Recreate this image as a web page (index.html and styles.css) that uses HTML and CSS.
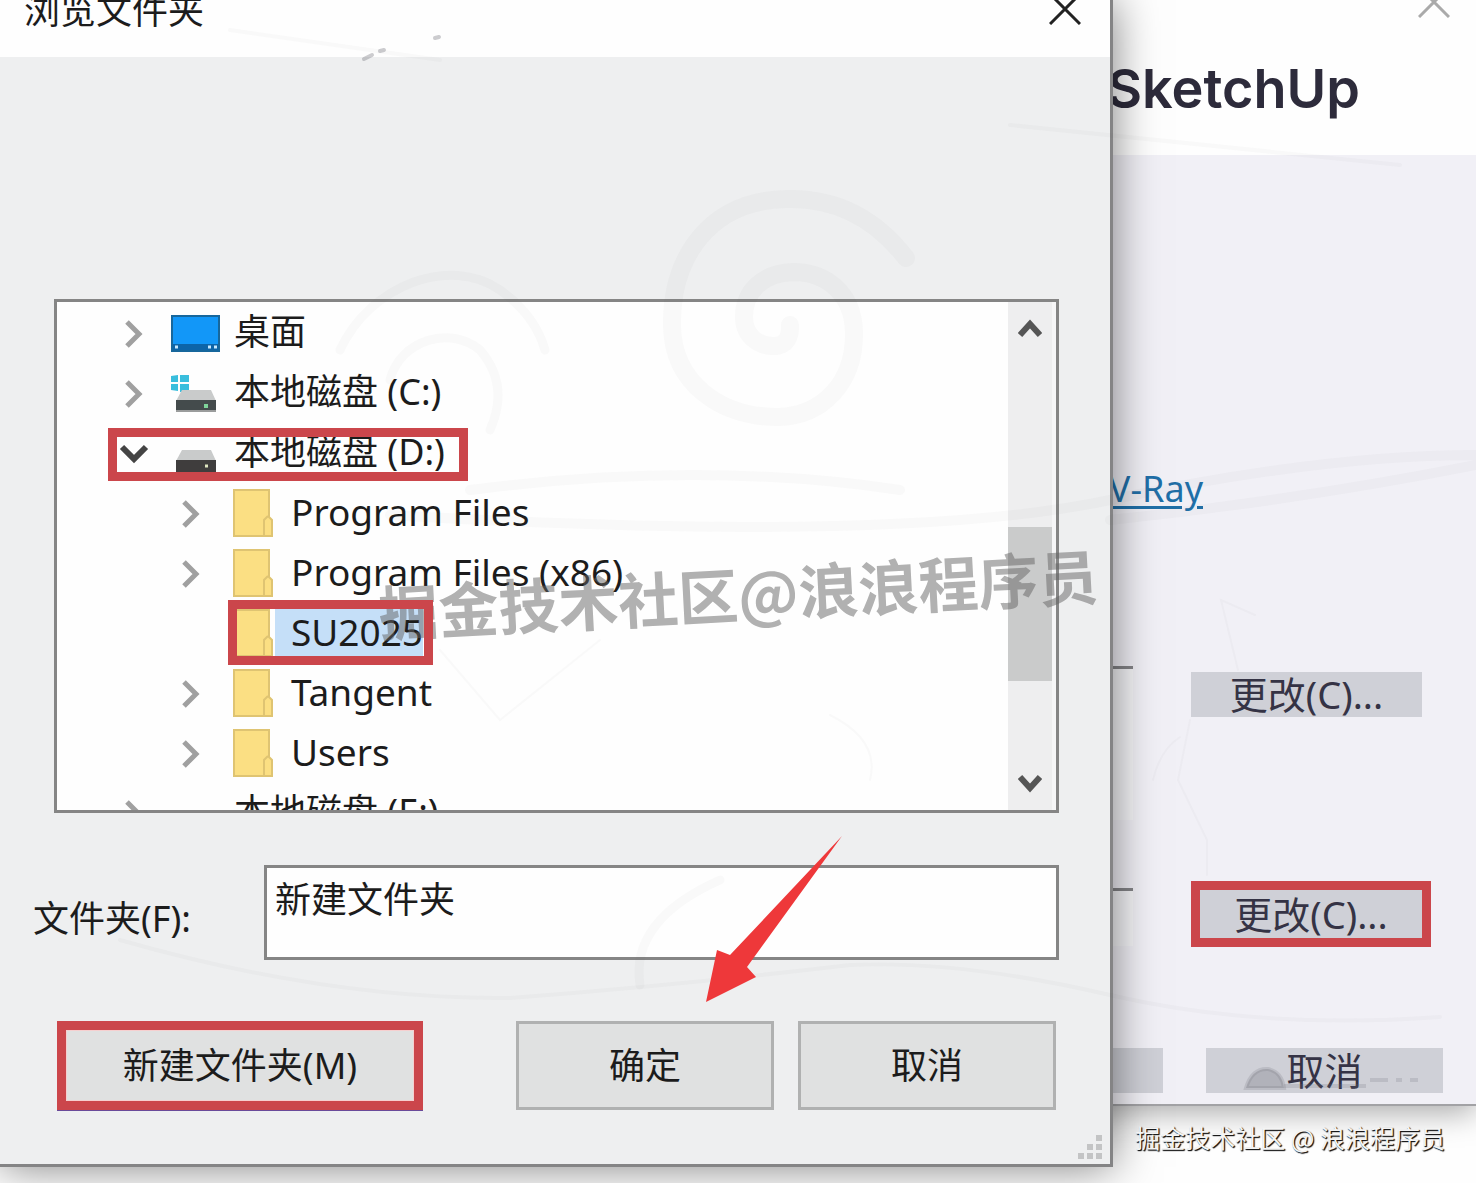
FILE: index.html
```
<!DOCTYPE html>
<html lang="zh-CN">
<head>
    <meta charset="utf-8">
    <title>浏览文件夹</title>
    <link rel="stylesheet" href="styles.css">
</head>
<body>
    <!-- Installer window -->
    <section class="installer">
        <header class="installer-header">
            <button class="close close-inactive" type="button" aria-label="关闭">
                <svg width="32" height="32" viewBox="0 0 32 32"><path d="M1 1L31 31M31 1L1 31"/></svg>
            </button>
            <h1>SketchUp</h1>
        </header>
        <div class="installer-main">
            <p class="link-line"><a href="#">V-Ray</a></p>
            <div class="path-row">
                <input class="path path-tall" type="text" aria-label="SketchUp">
                <button class="flat-btn" type="button">更改(C)...</button>
            </div>
            <div class="path-row">
                <input class="path" type="text" aria-label="V-Ray">
                <button class="flat-btn marked-change" type="button">更改(C)...</button>
            </div>
            <div class="installer-footer">
                <button class="flat-btn" type="button" aria-label="安装"></button>
                <button class="flat-btn" type="button">取消</button>
            </div>
        </div>
    </section>

    <!-- Browse for folder dialog -->
    <section class="dialog">
        <header class="title-bar">
            <h2>浏览文件夹</h2>
            <button class="close" type="button" aria-label="关闭">
                <svg width="32" height="32" viewBox="0 0 32 32"><path d="M1 1L31 31M31 1L1 31"/></svg>
            </button>
        </header>

        <form class="pane">
            <div class="tree">
                <ul>
                    <li>
                        <button class="toggle" type="button" aria-label="展开"><svg width="20" height="30" viewBox="0 0 20 30"><path d="M3 3L15 15L3 27"/></svg></button>
                        <svg class="icon" width="50" height="38" viewBox="0 0 50 38">
                            <rect x="1" y="1" width="47" height="35" fill="#1297f8" stroke="#17679c" stroke-width="2"/>
                            <path d="M2 32H47" stroke="#0c64a8" stroke-width="6"/>
                            <path d="M4 32H7M37 32H40M43 32H46" stroke="#c4e8ff" stroke-width="3"/>
                        </svg>
                        <span>桌面</span>
                    </li>
                    <li>
                        <button class="toggle" type="button" aria-label="展开"><svg width="20" height="30" viewBox="0 0 20 30"><path d="M3 3L15 15L3 27"/></svg></button>
                        <svg class="icon" width="50" height="38" viewBox="0 0 50 38">
                            <path d="M0 1L7 0V7H0ZM9 0L18 -1V7H9ZM0 9H7V16L0 15ZM9 9H18V19L9 17Z" fill="#39bedd"/>
                            <path d="M11 15H40L45 26H5Z" fill="#c9cbcb"/>
                            <rect x="5" y="25" width="40" height="12" fill="#444b4c"/>
                            <path d="M5 36H45" stroke="#9a9c9c" stroke-width="2"/>
                            <path d="M33 31H37" stroke="#7fd49a" stroke-width="4"/>
                        </svg>
                        <span>本地磁盘 (C:)</span>
                    </li>
                    <li class="marked-drive">
                        <button class="toggle open" type="button" aria-label="折叠"><svg width="30" height="20" viewBox="0 0 30 20"><path d="M3 3L15 15L27 3"/></svg></button>
                        <svg class="icon" width="50" height="38" viewBox="0 0 50 38">
                            <path d="M11 15H40L45 26H5Z" fill="#c9cbcb"/>
                            <rect x="5" y="25" width="40" height="12" fill="#3f3d3d"/>
                            <path d="M34 31H37" stroke="#dfe6c0" stroke-width="3"/>
                        </svg>
                        <span>本地磁盘 (D:)</span>
                    </li>
                    <li class="child">
                        <button class="toggle" type="button" aria-label="展开"><svg width="20" height="30" viewBox="0 0 20 30"><path d="M3 3L15 15L3 27"/></svg></button>
                        <svg class="folder" width="40" height="48" viewBox="0 0 40 48"><path d="M1 1H36V28L39 31V47H1Z"/><path d="M31 47V31L35 27"/></svg>
                        <span>Program Files</span>
                    </li>
                    <li class="child">
                        <button class="toggle" type="button" aria-label="展开"><svg width="20" height="30" viewBox="0 0 20 30"><path d="M3 3L15 15L3 27"/></svg></button>
                        <svg class="folder" width="40" height="48" viewBox="0 0 40 48"><path d="M1 1H36V28L39 31V47H1Z"/><path d="M31 47V31L35 27"/></svg>
                        <span>Program Files (x86)</span>
                    </li>
                    <li class="child marked-folder">
                        <i class="toggle"></i>
                        <svg class="folder" width="40" height="48" viewBox="0 0 40 48"><path d="M1 1H36V28L39 31V47H1Z"/><path d="M31 47V31L35 27"/></svg>
                        <span class="selected">SU2025</span>
                    </li>
                    <li class="child">
                        <button class="toggle" type="button" aria-label="展开"><svg width="20" height="30" viewBox="0 0 20 30"><path d="M3 3L15 15L3 27"/></svg></button>
                        <svg class="folder" width="40" height="48" viewBox="0 0 40 48"><path d="M1 1H36V28L39 31V47H1Z"/><path d="M31 47V31L35 27"/></svg>
                        <span>Tangent</span>
                    </li>
                    <li class="child">
                        <button class="toggle" type="button" aria-label="展开"><svg width="20" height="30" viewBox="0 0 20 30"><path d="M3 3L15 15L3 27"/></svg></button>
                        <svg class="folder" width="40" height="48" viewBox="0 0 40 48"><path d="M1 1H36V28L39 31V47H1Z"/><path d="M31 47V31L35 27"/></svg>
                        <span>Users</span>
                    </li>
                    <li>
                        <button class="toggle" type="button" aria-label="展开"><svg width="20" height="30" viewBox="0 0 20 30"><path d="M3 3L15 15L3 27"/></svg></button>
                        <i class="icon"></i>
                        <span>本地磁盘 (E:)</span>
                    </li>
                </ul>
                <div class="scrollbar">
                    <button type="button" aria-label="向上"><svg width="24" height="20" viewBox="0 0 24 20"><path d="M2 17L12 6L22 17"/></svg></button>
                    <div class="track"><div class="thumb"></div></div>
                    <button type="button" aria-label="向下"><svg width="24" height="20" viewBox="0 0 24 20"><path d="M2 3L12 14L22 3"/></svg></button>
                </div>
            </div>

            <div class="field">
                <label for="folder">文件夹(F):</label>
                <input type="text" id="folder" name="folder" value="新建文件夹">
            </div>

            <div class="actions">
                <button class="new-folder" type="button">新建文件夹(M)</button>
                <button type="button">确定</button>
                <button type="button">取消</button>
            </div>
        </form>

        <svg class="grip" width="24" height="24" viewBox="0 0 24 24"><path d="M18 0h6v6h-6zM9 9h6v6H9zM18 9h6v6h-6zM0 18h6v6H0zM9 18h6v6H9zM18 18h6v6h-6z"/></svg>
    </section>

    <!-- Pale line drawing and the red arrow -->
    <svg class="overlay" width="1476" height="1183" viewBox="0 0 1476 1183">
        <g class="sketch">
            <path stroke-width="18" d="M906 258C872 214 830 198 787 199C710 200 671 257 672 326C673 383 720 417 778 417C823 416 855 382 854 332C853 292 825 272 793 272C763 273 744 291 744 317C744 337 760 347 776 346Q791 344 790 325"/>
            <path stroke-width="9" d="M340 350C370 285 450 255 500 290Q535 315 545 350M390 380C400 340 450 325 480 350Q510 385 490 430"/>
            <path stroke-width="10" d="M390 515Q900 545 1110 500T1476 455M1110 520Q1300 500 1476 465M470 490Q700 460 900 490"/>
            <path stroke-width="4" d="M120 940Q330 1000 510 998Q680 985 850 965Q960 960 1110 995T1440 1017M230 30L440 60M1010 125L1400 165"/>
            <path stroke-width="2" d="M1255 615L1221 600L1238 670M1190 720L1178 780L1207 840V875M1180 737Q1160 750 1153 780M440 650L500 720L600 640M830 715Q880 740 870 780"/>
            <path stroke-width="9" d="M640 985Q630 920 720 880"/>
        </g>
        <path class="specks" d="M364 59L372 55M380 51L384 50M435 38L439 37"/>
        <g class="smudge">
            <path d="M1246 1088Q1252 1068 1268 1069Q1282 1072 1284 1088Z"/>
            <path d="M1284 1086H1366M1370 1080H1388M1396 1080H1402M1410 1080H1418"/>
        </g>
        <path class="arrow" d="M842 836L730 955L717 950L706 1002L756 977L747 967Z"/>
    </svg>
    <p class="watermark">掘金技术社区@浪浪程序员</p>
    <p class="credit">掘金技术社区 @ 浪浪程序员</p>
</body>
</html>
```
FILE: styles.css
```
body {
    position: relative;
    min-height: 100vh;
    margin: 0;
    overflow: hidden;
    background: #fefefe;
    color: #1c1c1c;
    font: 36px/48px "Noto Sans", "Noto Sans CJK SC", sans-serif;
}

* {
    box-sizing: border-box;
}

h1, h2, p, ul {
    margin: 0;
    padding: 0;
}

button, input {
    margin: 0;
    padding: 0;
    border: 0;
    border-radius: 0;
    background: none;
    color: inherit;
    font: inherit;
}

svg {
    display: block;
    fill: none;
}

.close svg {
    stroke: #222;
    stroke-width: 3;
}

.close-inactive svg {
    stroke: #aaa;
}

/* Installer window */
.installer {
    position: absolute;
    top: 0;
    left: 800px;
    right: 0;
    border-bottom: 2px solid #a2a2a5;
    background: #f1f0f6;
    box-shadow: 0 6px 30px rgba(0, 0, 0, 0.35);
}

.installer-header {
    height: 155px;
    padding: 0 26px;
    background: #fefefe;
    text-align: right;
}

.installer-header .close {
    display: flex;
    align-items: flex-start;
    height: 57px;
    margin-left: auto;
}

.installer-header .close svg {
    margin-top: -14px;
}

.installer-header h1 {
    padding-right: 90px;
    color: #2d2b3b;
    font: 600 54px/64px Inter, sans-serif;
}

.installer-main {
    display: flex;
    flex-direction: column;
    padding: 310px 33px 11px;
}

.link-line {
    padding-right: 240px;
    text-align: right;
}

.link-line a {
    color: #1f6fa8;
    text-decoration-thickness: 3px;
    text-underline-offset: 4px;
}

.path-row {
    display: flex;
    align-items: flex-start;
    gap: 58px;
    height: 222px;
}

.link-line + .path-row {
    margin-top: 153px;
}

.path-row:nth-of-type(2) {
    height: 160px;
}

.path {
    flex: 1;
    min-width: 0;
    height: 58px;
    border-top: 3px solid #858588;
    background: #f5f5f8;
}

.path-tall {
    height: 154px;
}

.flat-btn {
    flex-shrink: 0;
    width: 237px;
    height: 45px;
    background: #cfd0d7;
    color: #353345;
    font-size: 38px;
    line-height: 45px;
    white-space: nowrap;
}

.path-row .flat-btn {
    width: 231px;
    margin: 6px 21px 0 0;
}

.path-row .marked-change {
    width: 240px;
    height: 66px;
    margin: -7px 12px 0 0;
    border: 9px solid #cb464b;
}

.installer-footer {
    display: flex;
    justify-content: flex-end;
    gap: 43px;
}

/* Folder dialog */
.dialog {
    position: absolute;
    top: 0;
    left: 0;
    right: 363px;
    border: solid #848485;
    border-width: 0 3px 3px 0;
    background: #eeeff0;
    box-shadow: 0 0 42px rgba(0, 0, 0, 0.5);
}

.title-bar {
    display: flex;
    justify-content: space-between;
    height: 57px;
    padding: 0 29px 0 24px;
    background: #fefefe;
}

.title-bar h2 {
    font-size: 36px;
    font-weight: 400;
    line-height: 22px;
}

.title-bar .close {
    height: 18px;
}

.title-bar .close svg {
    margin-top: -7px;
}

.pane {
    padding: 242px 51px 54px 54px;
}

.tree {
    display: flex;
    height: 514px;
    border: 3px solid #858585;
    background: #fefefe;
    overflow: hidden;
}

.tree ul {
    flex: 1;
    list-style: none;
}

.tree li {
    position: relative;
    display: flex;
    align-items: center;
    height: 60px;
    padding-left: 62px;
    white-space: nowrap;
}

.tree li.child {
    padding-left: 119px;
    font-size: 37px;
}

.toggle {
    display: flex;
    justify-content: center;
    width: 30px;
    margin: 4px 22px 0 0;
}

.toggle svg {
    stroke: #a0a0a0;
    stroke-width: 5;
}

.toggle.open svg {
    stroke: #444;
    stroke-width: 6;
}

.icon {
    width: 50px;
    margin: 3px 13px 0 0;
}

.child .toggle {
    margin-right: 27px;
}

.folder {
    margin: 2px 18px 0 0;
    fill: #fbdf83;
    stroke: #dfc472;
    stroke-width: 2;
}

.selected {
    background: #c5dff8;
    box-shadow: -16px 0 #c5dff8;
}

/* Red frames round the items to click */
.marked-drive::after,
.marked-folder::after {
    content: "";
    position: absolute;
    z-index: 1;
    top: 6px;
    left: 51px;
    box-sizing: border-box;
    width: 360px;
    height: 53px;
    border: 9px solid #cb464b;
}

.marked-folder::after {
    top: -2px;
    left: 171px;
    width: 205px;
    height: 65px;
}

.scrollbar {
    display: flex;
    flex-direction: column;
    width: 48px;
    border-right: 4px solid #f6f6f7;
    background: #eeeeef;
}

.scrollbar button {
    display: flex;
    align-items: center;
    justify-content: center;
    height: 52px;
}

.scrollbar svg {
    stroke: #555;
    stroke-width: 6;
}

.track {
    flex: 1;
    padding-top: 173px;
}

.thumb {
    height: 154px;
    background: #cacbcb;
}

.field {
    display: flex;
    align-items: center;
    margin: 52px 0 61px -21px;
}

.field label {
    width: 231px;
    padding-top: 12px;
}

.field input {
    flex: 1;
    min-width: 0;
    height: 95px;
    padding: 0 8px 30px;
    border: 3px solid #858585;
    background: #fefefe;
}

.actions {
    display: flex;
    gap: 24px;
    padding: 0 3px;
}

.actions button {
    width: 258px;
    height: 89px;
    border: 3px solid #b0b1b1;
    background: #e0e1e1;
}

.actions .new-folder {
    width: 366px;
    margin-right: auto;
    border: 9px solid #cb464b;
    box-shadow: inset 0 0 0 1px #f6cfcf, 0 1px #6a4a9a;
}

.grip {
    position: absolute;
    right: 8px;
    bottom: 5px;
    fill: #c3c4c5;
}

/* Everything that lies over both windows */
.overlay {
    position: absolute;
    top: 0;
    left: 0;
    pointer-events: none;
}

.sketch {
    stroke: rgba(90, 90, 110, 0.03);
    stroke-linecap: round;
}

.specks {
    stroke: rgba(90, 90, 100, 0.3);
    stroke-width: 4;
    stroke-linecap: round;
}

.smudge {
    fill: rgba(110, 110, 120, 0.3);
    stroke: rgba(110, 110, 120, 0.2);
    stroke-width: 4;
}

.arrow {
    fill: #ee383a;
}

.watermark {
    position: absolute;
    top: 548px;
    left: 378px;
    color: rgba(100, 100, 100, 0.5);
    font: 700 60px/88px "Noto Sans CJK SC", sans-serif;
    white-space: nowrap;
    transform: rotate(-3deg);
    pointer-events: none;
}

.credit {
    position: absolute;
    right: 31px;
    bottom: 28px;
    color: #f4f4f4;
    font: 25px/36px "Noto Sans CJK SC", sans-serif;
    text-shadow: 1px 1px 1px #111, 1px 1px 1px #444;
}
```
